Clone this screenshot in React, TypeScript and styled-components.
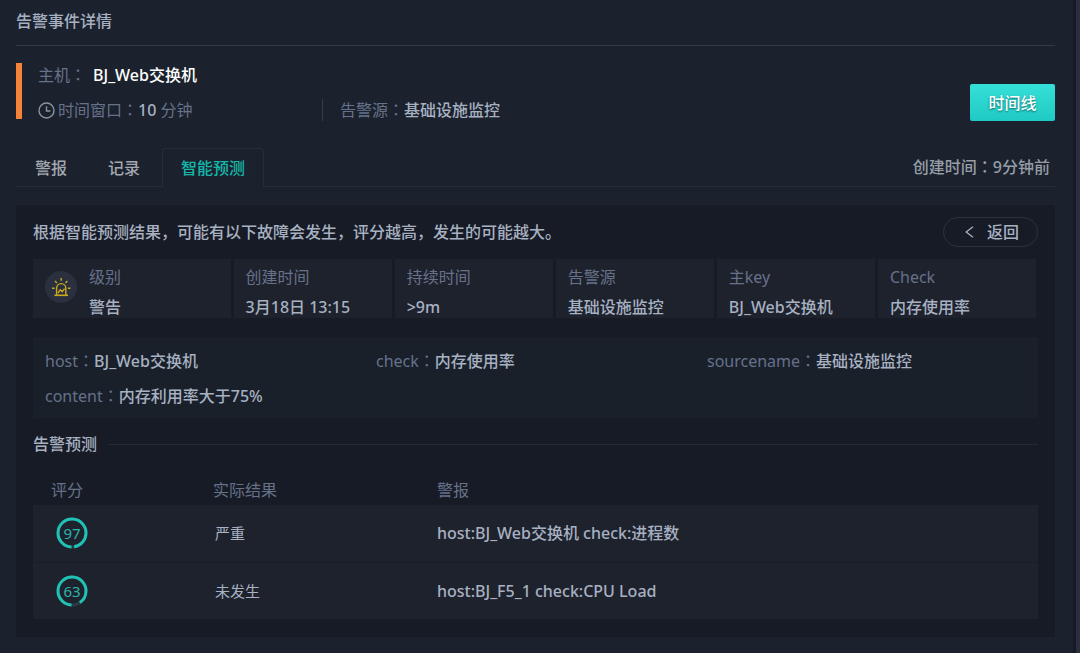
import React from 'react';
import styled, { createGlobalStyle } from 'styled-components';

const color = {
  page: '#1b222d',
  panel: '#171b25',
  cell: '#1e222d',
  detail: '#19202a',
  line: '#272e39',
  label: '#66718a',
  text: '#a7b1c2',
  teal: '#14b8ac',
};

const GlobalStyle = createGlobalStyle`
  *, *::before, *::after { box-sizing: border-box; }
  body {
    margin: 0;
    background: ${color.page};
    color: ${color.text};
    font: 16px/22px "Noto Sans", "Noto Sans CJK SC", sans-serif;
  }
  button { font: inherit; cursor: pointer; }
`;

const Frame = styled.div`
  min-height: 100vh;
  border-right: 4px solid #2a2f40;
`;

const Page = styled.main`
  min-height: 100vh;
  padding: 10px 18px 16px 16px;
  border-right: 3px solid #171a26;
  background: ${color.page};
`;

const Title = styled.h1`
  margin: 0;
  padding-bottom: 13px;
  border-bottom: 1px solid #323a44;
  font-size: 16px;
  font-weight: 500;
  line-height: 22px;
`;

const Summary = styled.header`
  display: flex;
  align-items: flex-start;
  gap: 16px;
  margin-top: 17px;
`;

const Accent = styled.span`
  width: 6px;
  height: 56px;
  background: #f58338;
`;

const SummaryLines = styled.div`
  flex: 1;
  display: flex;
  flex-direction: column;
  gap: 13px;
  padding-top: 1px;
`;

const SummaryLine = styled.div`
  display: flex;
  align-items: center;
`;

const TimeWindow = styled.div`
  display: flex;
  align-items: center;
  gap: 3px;
  width: 285px;
  margin-right: 17px;
  border-right: 1px solid #343c49;
`;

const Label = styled.span`
  color: ${color.label};
`;

const ColonMark = styled.span`
  font-family: "Noto Sans CJK JP", sans-serif;
  line-height: 0;
`;

const Value = styled.span<{ $bright?: boolean }>`
  color: ${(p) => (p.$bright ? '#ffffff' : color.text)};
  font-weight: 500;
`;

const HostName = styled(Value)`
  margin-left: 7px;
`;

const TimelineButton = styled.button`
  align-self: flex-end;
  width: 85px;
  height: 37px;
  padding: 0;
  border: 0;
  border-radius: 2px;
  background: linear-gradient(#35e0d8, #20cac4);
  color: #ffffff;
  font-weight: 500;
  text-shadow: 0 1px 2px rgba(0, 60, 60, 0.7);
`;

const TabBar = styled.div`
  display: flex;
  justify-content: space-between;
  margin-top: 27px;
  border-bottom: 1px solid ${color.line};
`;

const Tabs = styled.div`
  display: flex;
  gap: 3px;
  margin-bottom: -1px;
`;

const Tab = styled.button<{ $active?: boolean }>`
  height: 39px;
  padding: 0 18px;
  border: 1px solid ${(p) => (p.$active ? color.line : 'transparent')};
  border-bottom-color: ${(p) => (p.$active ? color.page : 'transparent')};
  border-radius: 4px 4px 0 0;
  background: transparent;
  color: ${(p) => (p.$active ? color.teal : '#a3a8b0')};
  font-weight: 500;
`;

const Created = styled.div`
  align-self: center;
  padding-right: 5px;
  color: #979da7;
  font-weight: 500;
`;

const Panel = styled.section`
  margin-top: 18px;
  padding: 12px 17px 18px;
  background: ${color.panel};
`;

const Intro = styled.div`
  display: flex;
  align-items: center;
  justify-content: space-between;
  gap: 16px;
`;

const IntroText = styled.p`
  margin: 0;
  font-weight: 500;
`;

const BackButton = styled.button`
  display: flex;
  align-items: center;
  justify-content: center;
  gap: 13px;
  width: 95px;
  height: 30px;
  padding: 0 0 0 3px;
  border: 1px solid #2c313c;
  border-radius: 15px;
  background: transparent;
  color: ${color.text};
  font-weight: 500;
`;

const Facts = styled.div`
  display: grid;
  grid-template-columns: 5fr repeat(5, 4fr);
  gap: 3px;
  margin: 12px 2px 0 0;
`;

const Fact = styled.div`
  display: flex;
  align-items: flex-start;
  gap: 12px;
  padding: 7px 0 0 12px;
  background: ${color.cell};
  white-space: nowrap;
`;

const FactLines = styled.div`
  display: flex;
  flex-direction: column;
  gap: 8px;
`;

const Badge = styled.span`
  display: grid;
  place-items: center;
  width: 32px;
  height: 32px;
  margin-top: 5px;
  border-radius: 50%;
  background: #2a303d;
`;

const Details = styled.div`
  display: grid;
  grid-template-columns: repeat(3, 1fr);
  gap: 13px 0;
  margin-top: 19px;
  padding: 13px 0 11px 12px;
  background: ${color.detail};
`;

const SectionTitle = styled.h2`
  display: flex;
  align-items: center;
  gap: 12px;
  margin: 15px 0 0;
  font-size: 16px;
  font-weight: 500;
  line-height: 22px;

  &::after {
    content: '';
    flex: 1;
    height: 1px;
    background: #242a34;
  }
`;

const Table = styled.table`
  width: 100%;
  margin-top: 19px;
  border-collapse: collapse;
  table-layout: fixed;
`;

const HeadCell = styled.th<{ $width?: number }>`
  width: ${(p) => (p.$width ? `${p.$width}px` : 'auto')};
  height: 31px;
  padding: 0 0 0 18px;
  color: ${color.label};
  font-weight: 400;
  text-align: left;
`;

const Row = styled.tr`
  background: ${color.cell};

  & + & {
    border-top: 1px solid #191d27;
  }
`;

const Cell = styled.td`
  height: 57px;
  padding: 0 0 0 18px;
`;

const ScoreCell = styled(Cell)`
  padding-left: 23px;
`;

const ResultCell = styled(Cell)`
  padding-left: 20px;
  font-size: 15px;
`;

const AlertCell = styled(Cell)`
  font-weight: 500;
`;

const Score = styled.div`
  display: grid;
  place-items: center;
  width: 32px;
  height: 32px;
  color: #2bb5a9;
  font-size: 15px;

  & > * {
    grid-area: 1 / 1;
  }
`;

/* The Japanese form of the full-width colon sits in the middle of its cell. */
const Colon = () => <ColonMark lang="ja">：</ColonMark>;

const ClockIcon = () => (
  <svg width="17" height="17" viewBox="0 0 17 17" fill="none" stroke="#8b93a2" strokeWidth="1.4" aria-hidden="true">
    <circle cx="8.5" cy="8.5" r="7.5" />
    <path d="M8.5 4.2V9H12.4" />
  </svg>
);

const ChevronIcon = () => (
  <svg width="9" height="12" viewBox="0 0 9 12" fill="none" stroke="#a7b1c2" strokeWidth="1.3" aria-hidden="true">
    <path d="M8 0.8L1.2 6L8 11.2" />
  </svg>
);

const AlarmIcon = () => (
  <svg width="20" height="20" viewBox="0 0 20 20" fill="none" stroke="#c9a91d" strokeWidth="1.4" aria-hidden="true">
    <path d="M5.6 18V11.2A4.6 4.6 0 0 1 14.8 11.2V18" />
    <path d="M3.4 18.3H17" strokeWidth="1.6" />
    <path d="M10.2 1V3.8M4 4L5.9 6M16.4 4L14.5 6M1 11.2H3.6M16.8 11.2H19.4" />
    <path d="M7 16L9.3 12.8L11.2 14.6L13.6 11.6" />
  </svg>
);

const RADIUS = 14;

const Ring = ({ filled }: { filled: number }) => (
  <svg width="32" height="32" viewBox="0 0 32 32" fill="none" strokeWidth="3" aria-hidden="true">
    <circle cx="16" cy="16" r={RADIUS} stroke="#2a3a42" />
    <circle
      cx="16"
      cy="16"
      r={RADIUS}
      stroke="#1fc2b5"
      pathLength={100}
      strokeDasharray={`${filled} 100`}
      transform="rotate(92 16 16)"
    />
  </svg>
);

const Field = ({ name, value }: { name: string; value: string }) => (
  <div>
    <Label>
      {name}
      <Colon />
    </Label>
    <Value>{value}</Value>
  </div>
);

const facts = [
  { label: '级别', value: '警告', icon: true },
  { label: '创建时间', value: '3月18日 13:15' },
  { label: '持续时间', value: '>9m' },
  { label: '告警源', value: '基础设施监控' },
  { label: '主key', value: 'BJ_Web交换机' },
  { label: 'Check', value: '内存使用率' },
];

const details = [
  { name: 'host', value: 'BJ_Web交换机' },
  { name: 'check', value: '内存使用率' },
  { name: 'sourcename', value: '基础设施监控' },
  { name: 'content', value: '内存利用率大于75%' },
];

const predictions = [
  { score: 97, filled: 97, result: '严重', alert: 'host:BJ_Web交换机 check:进程数' },
  { score: 63, filled: 90, result: '未发生', alert: 'host:BJ_F5_1 check:CPU Load' },
];

export default function App() {
  return (
    <Frame lang="zh-CN">
      <GlobalStyle />
      <Page>
        <Title>告警事件详情</Title>

        <Summary>
          <Accent />
          <SummaryLines>
            <SummaryLine>
              <Label>
                主机
                <Colon />
              </Label>
              <HostName $bright>BJ_Web交换机</HostName>
            </SummaryLine>
            <SummaryLine>
              <TimeWindow>
                <ClockIcon />
                <span>
                  <Label>
                    时间窗口
                    <Colon />
                  </Label>
                  <Value>10</Value>
                  <Label> 分钟</Label>
                </span>
              </TimeWindow>
              <Field name="告警源" value="基础设施监控" />
            </SummaryLine>
          </SummaryLines>
          <TimelineButton type="button">时间线</TimelineButton>
        </Summary>

        <TabBar>
          <Tabs role="tablist">
            <Tab type="button" role="tab" aria-selected={false}>警报</Tab>
            <Tab type="button" role="tab" aria-selected={false}>记录</Tab>
            <Tab type="button" role="tab" aria-selected $active>智能预测</Tab>
          </Tabs>
          <Created>
            创建时间
            <Colon />
            9分钟前
          </Created>
        </TabBar>

        <Panel>
          <Intro>
            <IntroText>根据智能预测结果，可能有以下故障会发生，评分越高，发生的可能越大。</IntroText>
            <BackButton type="button">
              <ChevronIcon />
              返回
            </BackButton>
          </Intro>

          <Facts>
            {facts.map((f) => (
              <Fact key={f.label}>
                {f.icon && (
                  <Badge>
                    <AlarmIcon />
                  </Badge>
                )}
                <FactLines>
                  <Label>{f.label}</Label>
                  <Value>{f.value}</Value>
                </FactLines>
              </Fact>
            ))}
          </Facts>

          <Details>
            {details.map((d) => (
              <Field key={d.name} name={d.name} value={d.value} />
            ))}
          </Details>

          <SectionTitle>告警预测</SectionTitle>

          <Table>
            <thead>
              <tr>
                <HeadCell scope="col" $width={162}>评分</HeadCell>
                <HeadCell scope="col" $width={224}>实际结果</HeadCell>
                <HeadCell scope="col">警报</HeadCell>
              </tr>
            </thead>
            <tbody>
              {predictions.map((p) => (
                <Row key={p.score}>
                  <ScoreCell>
                    <Score>
                      <Ring filled={p.filled} />
                      <span>{p.score}</span>
                    </Score>
                  </ScoreCell>
                  <ResultCell>{p.result}</ResultCell>
                  <AlertCell>{p.alert}</AlertCell>
                </Row>
              ))}
            </tbody>
          </Table>
        </Panel>
      </Page>
    </Frame>
  );
}
